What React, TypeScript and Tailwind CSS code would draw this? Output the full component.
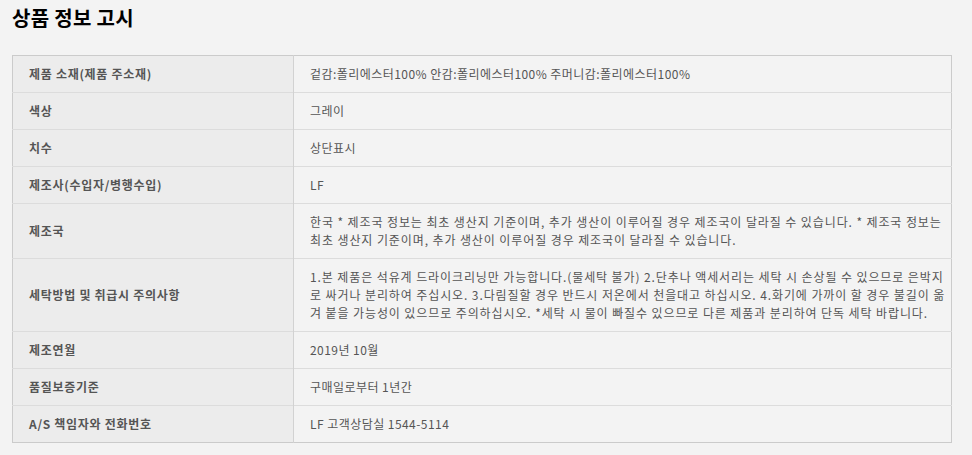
const rows: { label: string; lines: string[] }[] = [
  { label: "제품 소재(제품 주소재)", lines: ["겉감:폴리에스터100% 안감:폴리에스터100% 주머니감:폴리에스터100%"] },
  { label: "색상", lines: ["그레이"] },
  { label: "치수", lines: ["상단표시"] },
  { label: "제조사(수입자/병행수입)", lines: ["LF"] },
  {
    label: "제조국",
    lines: [
      "한국 * 제조국 정보는 최초 생산지 기준이며, 추가 생산이 이루어질 경우 제조국이 달라질 수 있습니다. * 제조국 정보는",
      "최초 생산지 기준이며, 추가 생산이 이루어질 경우 제조국이 달라질 수 있습니다.",
    ],
  },
  {
    label: "세탁방법 및 취급시 주의사항",
    lines: [
      "1.본 제품은 석유계 드라이크리닝만 가능합니다.(물세탁 불가) 2.단추나 액세서리는 세탁 시 손상될 수 있으므로 은박지",
      "로 싸거나 분리하여 주십시오. 3.다림질할 경우 반드시 저온에서 천을대고 하십시오. 4.화기에 가까이 할 경우 불길이 옮",
      "겨 붙을 가능성이 있으므로 주의하십시오. *세탁 시 물이 빠질수 있으므로 다른 제품과 분리하여 단독 세탁 바랍니다.",
    ],
  },
  { label: "제조연월", lines: ["2019년 10월"] },
  { label: "품질보증기준", lines: ["구매일로부터 1년간"] },
  { label: "A/S 책임자와 전화번호", lines: ["LF 고객상담실 1544-5114"] },
];

export default function App() {
  return (
    <div
      className="min-h-[455px] bg-[#f3f3f3] pl-3 pr-5 pt-[5px]"
      style={{ fontFamily: '"Noto Sans CJK KR", "Noto Sans", sans-serif' }}
    >
      <h2 className="text-[20px] font-bold leading-[26px] tracking-[0.3px] text-black">상품 정보 고시</h2>
      <table className="mt-[24px] w-[940px] border-collapse border border-[#cbcbcb] text-[12px] leading-[18px]">
        <tbody>
          {rows.map((row) => (
            <tr key={row.label} className="border-t border-[#dcdcdc] first:border-t-0">
              <th className="w-[281px] border-r border-[#d2d2d2] bg-[#ececec] py-[9px] pl-4 text-left align-middle font-bold tracking-[0.7px] text-[#555]">
                {row.label}
              </th>
              <td
                className={
                  row.lines.length > 1
                    ? "py-[9px] pl-4 tracking-[0.9px] text-[#555]"
                    : "py-[9px] pl-4 tracking-[0.45px] text-[#555]"
                }
              >
                {row.lines.map((line) => (
                  <div key={line} className="whitespace-nowrap">
                    {line}
                  </div>
                ))}
              </td>
            </tr>
          ))}
        </tbody>
      </table>
    </div>
  );
}
